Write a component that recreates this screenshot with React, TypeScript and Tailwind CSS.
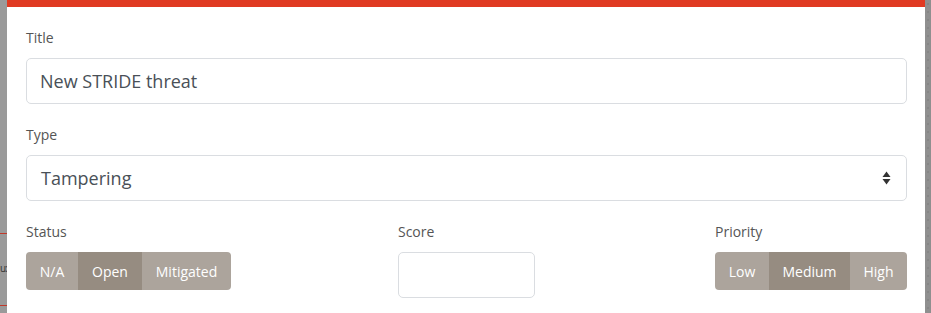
import React, { useState } from "react";

const font = { fontFamily: '"Open Sans", "Noto Sans", sans-serif' };

function Segmented({
  options,
  active,
  widths,
}: {
  options: string[];
  active: string;
  widths: string[];
}) {
  const [value, setValue] = useState(active);
  return (
    <div className="flex h-[38px] overflow-hidden rounded-[4px] bg-[#aca49c]">
      {options.map((opt, i) => (
        <button
          key={opt}
          onClick={() => setValue(opt)}
          className={`${widths[i]} flex items-center justify-center text-[14px] text-white ${
            value === opt ? "bg-[#968c81]" : ""
          }`}
        >
          {opt}
        </button>
      ))}
    </div>
  );
}

export default function App() {
  return (
    <div className="flex h-[313px] w-[931px] overflow-hidden bg-[#9a9a9a]" style={font}>
      {/* page behind the modal */}
      <div className="flex w-[7px] shrink-0 flex-col overflow-hidden">
        <div className="mt-[233px] h-[1px] bg-[#c0392b]" />
        <div className="mt-[26px] text-[10px] leading-[17px] tracking-[-1px] text-[#333]">u:</div>
        <div className="mt-[28px] h-[1px] bg-[#c0392b]" />
      </div>

      {/* modal */}
      <div className="flex w-[918px] shrink-0 flex-col bg-white">
        <div className="h-[7px] bg-[#e03a22]" />
        <div className="flex flex-col pl-[19px] pr-[18px] pt-[20px]">
          <label className="mb-[10px] text-[14px] leading-[21px] text-[#555]">Title</label>
          <input
            defaultValue="New STRIDE threat"
            className="h-[46px] rounded-[5px] border border-[#dadde1] px-[13px] text-[18px] text-[#495057] outline-none"
          />

          <label className="mb-[10px] mt-[20px] text-[14px] leading-[21px] text-[#555]">Type</label>
          <div className="flex h-[46px] items-center justify-between rounded-[5px] border border-[#dadde1] pl-[14px] pr-[15px] text-[18px] text-[#495057]">
            <span>Tampering</span>
            <svg width="9" height="14" viewBox="0 0 9 14">
              <path d="M4.5 0.5 L8.5 6 L0.5 6 Z" fill="#333" />
              <path d="M0.5 8 L8.5 8 L4.5 13.5 Z" fill="#333" />
            </svg>
          </div>

          <div className="mt-[20px] grid grid-cols-3">
            <div className="flex flex-col items-start">
              <label className="mb-[10px] text-[14px] leading-[21px] text-[#555]">Status</label>
              <Segmented
                options={["N/A", "Open", "Mitigated"]}
                active="Open"
                widths={["w-[52px]", "w-[64px]", "w-[89px]"]}
              />
            </div>
            <div className="flex justify-center">
              <div className="flex w-[137px] flex-col">
                <label className="mb-[10px] text-[14px] leading-[21px] text-[#555]">Score</label>
                <input className="h-[46px] rounded-[5px] border border-[#dadde1] px-[12px] text-[18px] outline-none" />
              </div>
            </div>
            <div className="flex flex-col items-end">
              <div className="flex flex-col">
                <label className="mb-[10px] text-[14px] leading-[21px] text-[#555]">Priority</label>
                <Segmented
                  options={["Low", "Medium", "High"]}
                  active="Medium"
                  widths={["w-[54px]", "w-[81px]", "w-[57px]"]}
                />
              </div>
            </div>
          </div>
        </div>
      </div>

      {/* page scrollbar side */}
      <div className="w-[6px] shrink-0 bg-[#8f8f8f] bg-[radial-gradient(circle,#7a7a7a_0.6px,transparent_0.8px)] bg-[length:6px_8px]" />
    </div>
  );
}
